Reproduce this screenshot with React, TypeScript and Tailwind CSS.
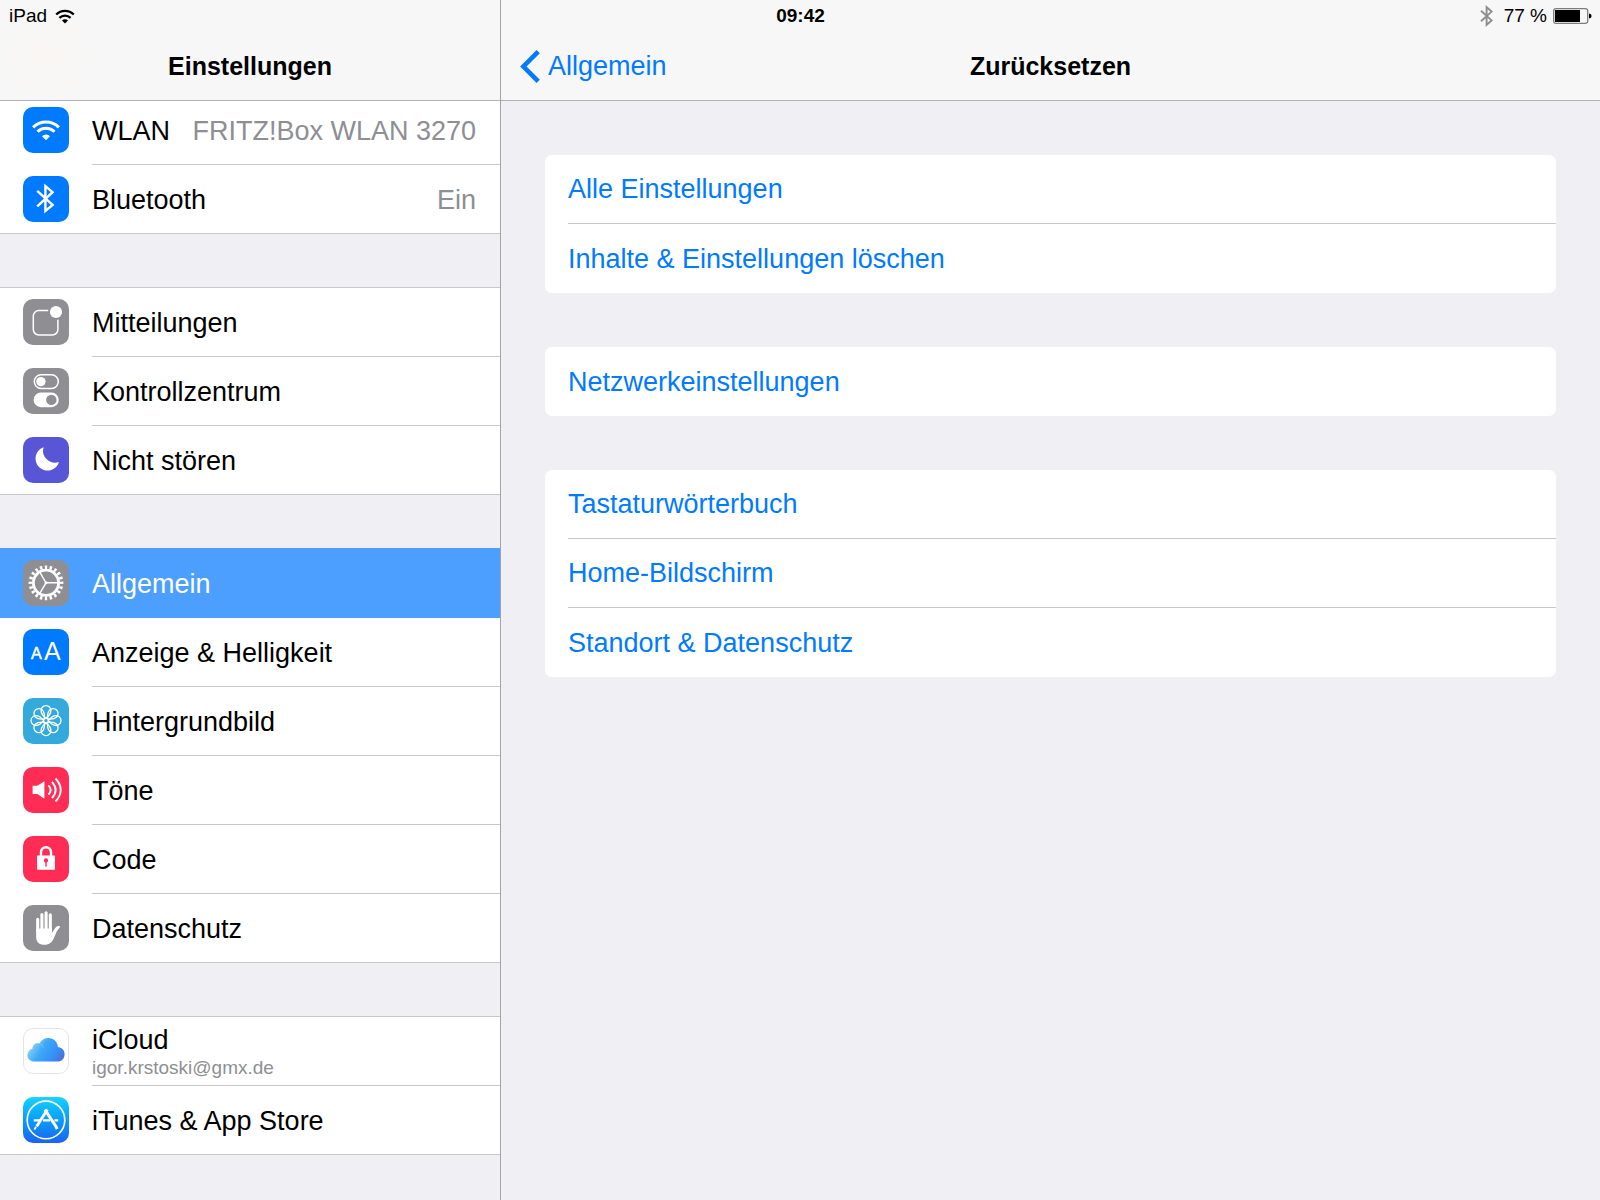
import { useState } from 'react';
import type { ReactNode } from 'react';

type Item = { title: string; icon: ReactNode; value?: string; detail?: string };

function Tile({ className, children }: { className: string; children: ReactNode }) {
  return (
    <svg viewBox="0 0 46 46" aria-hidden="true" className={`w-[46px] h-[46px] mt-[11px] shrink-0 rounded-[10px] ${className}`}>
      {children}
    </svg>
  );
}

const petals = [0, 45, 90, 135, 180, 225, 270, 315];

const WlanIcon = (
  <Tile className="bg-[#007aff]">
    <g fill="none" stroke="#fff" strokeWidth="3">
      <path d="M10.1 20.4A18.3 18.3 0 0 1 35.9 20.4" />
      <path d="M14.5 24.8A12 12 0 0 1 31.5 24.8" />
    </g>
    <path d="M23 33.3L19 29.2A5.8 5.8 0 0 1 27 29.2Z" fill="#fff" />
  </Tile>
);

const BluetoothIcon = (
  <Tile className="bg-[#007aff]">
    <path d="M14.2 14.8L29.6 28.9L22.4 35V10L29.6 16.2L14.2 30.4" fill="none" stroke="#fff" strokeWidth="2.4" />
  </Tile>
);

const NotificationsIcon = (
  <Tile className="bg-[#8e8e93]">
    <rect x="10.3" y="11.6" width="24.6" height="24.4" rx="5.5" fill="none" stroke="#fff" strokeWidth="1.5" />
    <circle cx="33" cy="13" r="8" fill="#8e8e93" />
    <circle cx="33" cy="13" r="6.1" fill="#fff" />
  </Tile>
);

const ControlCenterIcon = (
  <Tile className="bg-[#8e8e93]">
    <rect x="11.3" y="6.8" width="24" height="13.6" rx="6.8" fill="none" stroke="#fff" strokeWidth="1.5" />
    <circle cx="17.9" cy="13.6" r="4.7" fill="#fff" />
    <rect x="10.6" y="24.6" width="25.2" height="14.6" rx="7.3" fill="#fff" />
    <circle cx="28.3" cy="31.9" r="5.2" fill="#8e8e93" />
  </Tile>
);

const MoonIcon = (
  <Tile className="bg-[#5856d6]">
    <path d="M20.6 10.2A12 12 0 1 0 36 25A12 12 0 0 1 20.6 10.2Z" fill="#fff" />
  </Tile>
);

const GearIcon = (
  <Tile className="bg-[#8e8e93]">
    <g fill="none" stroke="#fff">
      <circle cx="23" cy="22.8" r="15.6" strokeWidth="3.6" pathLength="200" strokeDasharray="5 5" strokeDashoffset="2.5" />
      <circle cx="23" cy="22.8" r="12.6" strokeWidth="2.8" />
      <path d="M23 22.8H35M23 22.8L16.8 12.2M23 22.8L16.8 33.4" strokeWidth="1.4" />
    </g>
    <circle cx="23" cy="22.8" r="1.5" fill="#fff" />
  </Tile>
);

const DisplayIcon = (
  <Tile className="bg-[#007aff]">
    <text x="8" y="29.7" fontSize="16" fill="#fff" stroke="#fff" strokeWidth="0.5">A</text>
    <text x="21" y="31.4" fontSize="25" fill="#fff">A</text>
  </Tile>
);

const WallpaperIcon = (
  <Tile className="bg-[#34aadc]">
    <g transform="translate(23 22.6)" fill="none" stroke="#fff" strokeWidth="1.3">
      {petals.map(angle => (
        <path
          key={angle}
          transform={`rotate(${angle})`}
          d="M0 -2.4C-3.4 -5 -4.9 -7.4 -4.9 -10.1A4.9 4.9 0 0 1 4.9 -10.1C4.9 -7.4 3.4 -5 0 -2.4Z"
        />
      ))}
      <circle r="2.4" />
    </g>
  </Tile>
);

const SoundIcon = (
  <Tile className="bg-[#ff2d55]">
    <path d="M9.6 18.8H14.4L21.4 14.2V31.8L14.4 27H9.6Z" fill="#fff" />
    <g fill="none" stroke="#fff" strokeWidth="1.9">
      <path d="M25.4 18.4Q30 23 25.4 27.6" />
      <path d="M28.9 14.9Q36.4 23 28.9 31.1" />
      <path d="M32.6 11.5Q42.8 23 32.6 34.5" />
    </g>
  </Tile>
);

const LockIcon = (
  <Tile className="bg-[#ff2d55]">
    <path d="M18 20V16.2A5 5 0 0 1 28 16.2V20" fill="none" stroke="#fff" strokeWidth="2.4" />
    <rect x="14.1" y="19.6" width="17.8" height="14.2" rx="0.6" fill="#fff" />
    <circle cx="23" cy="24.4" r="2.1" fill="#ff2d55" />
    <rect x="22.3" y="25" width="1.4" height="5.6" fill="#ff2d55" />
  </Tile>
);

const HandIcon = (
  <Tile className="bg-[#8e8e93]">
    <path d="M14.7 26V14.2M18.9 26V9.6M23.1 26V7.8M27.3 26V9.8" fill="none" stroke="#fff" strokeWidth="3.1" strokeLinecap="round" />
    <path d="M13.15 23.5V32C13.2 37 16 39.8 21.6 39.8C26.4 39.8 28.8 37.4 30.6 33.8L34 26L37.3 21.7C36 20.3 33.8 20.9 32.4 22.8L28.85 28V23.5Z" fill="#fff" />
  </Tile>
);

const CloudIcon = (
  <Tile className="bg-white border border-[#e4e4e6]">
    <defs>
      <linearGradient id="cloud" x1="0" y1="0.3" x2="1" y2="0.7">
        <stop offset="0" stopColor="#9adcfb" />
        <stop offset="0.4" stopColor="#3fa9f5" />
        <stop offset="0.75" stopColor="#3391f8" />
        <stop offset="1" stopColor="#4a73dd" />
      </linearGradient>
    </defs>
    <path d="M11 34C6.8 34 3.6 31.4 3.6 27.4C3.6 23.8 5.8 21.4 8.8 20.6C9 16.4 12.6 14.2 16.2 15.2C18 11.4 21.4 9.4 25.4 9.4C31 9.4 35.2 13.4 35.4 18.8C39.6 19 42.4 22.4 42.4 26.4C42.4 31 39.4 34 35.2 34Z" fill="url(#cloud)" />
    <path d="M16.2 15.2C18.4 15.8 19.8 17.4 20.2 19.4" fill="none" stroke="#86d3fa" strokeWidth="0.6" />
  </Tile>
);

const StoreIcon = (
  <Tile className="bg-linear-to-b from-[#1bd2fd] to-[#1d62f0]">
    <g fill="none" stroke="#fff">
      <circle cx="23" cy="22.9" r="18.8" strokeWidth="1.6" />
      <path d="M10.8 23.4H17.4M20 23.4H27M31.4 23.4H35.2" strokeWidth="2.2" />
      <path d="M24.4 12.4L13.6 29.6" strokeWidth="2.8" />
      <path d="M13 29.8L11.4 32.6" strokeWidth="1.8" />
      <path d="M21.8 12.6L32.8 29.2L34.2 32" strokeWidth="3" />
    </g>
  </Tile>
);

const groups: Item[][] = [
  [
    { title: 'WLAN', icon: WlanIcon, value: 'FRITZ!Box WLAN 3270' },
    { title: 'Bluetooth', icon: BluetoothIcon, value: 'Ein' }
  ],
  [
    { title: 'Mitteilungen', icon: NotificationsIcon },
    { title: 'Kontrollzentrum', icon: ControlCenterIcon },
    { title: 'Nicht stören', icon: MoonIcon }
  ],
  [
    { title: 'Allgemein', icon: GearIcon },
    { title: 'Anzeige & Helligkeit', icon: DisplayIcon },
    { title: 'Hintergrundbild', icon: WallpaperIcon },
    { title: 'Töne', icon: SoundIcon },
    { title: 'Code', icon: LockIcon },
    { title: 'Datenschutz', icon: HandIcon }
  ],
  [
    { title: 'iCloud', icon: CloudIcon, detail: 'igor.krstoski@gmx.de' },
    { title: 'iTunes & App Store', icon: StoreIcon }
  ]
];

const resetGroups = [
  ['Alle Einstellungen', 'Inhalte & Einstellungen löschen'],
  ['Netzwerkeinstellungen'],
  ['Tastaturwörterbuch', 'Home-Bildschirm', 'Standort & Datenschutz']
];

function StatusBar() {
  return (
    <div className="absolute inset-x-0 top-0 z-20 h-8 grid grid-cols-3 items-center pl-[9px] pr-2 text-[19px] text-black">
      <div className="flex items-center gap-2">
        <span>iPad</span>
        <svg viewBox="0 0 20 15" aria-hidden="true" className="w-5 h-[15px]">
          <g fill="none" stroke="#000" strokeWidth="2.2">
            <path d="M1.2 5.6A12.4 12.4 0 0 1 18.8 5.6" />
            <path d="M4.4 8.9A8 8 0 0 1 15.6 8.9" />
          </g>
          <path d="M10 14.4L7 11.4A4.2 4.2 0 0 1 13 11.4Z" fill="#000" />
        </svg>
      </div>
      <span className="text-center font-bold">09:42</span>
      <div className="flex items-center justify-end gap-[6px]">
        <svg viewBox="0 0 14 22" aria-hidden="true" className="w-[14px] h-[22px] mr-1">
          <path d="M1 5.8L11.6 15.4L6.6 19.8V2.2L11.6 6.6L1 16.2" fill="none" stroke="#8e8e8e" strokeWidth="1.9" />
        </svg>
        <span>77 %</span>
        <svg viewBox="0 0 39 16" aria-hidden="true" className="w-[39px] h-4">
          <rect x="0.7" y="0.7" width="34" height="14.6" rx="2.4" fill="none" stroke="#7d7d7d" strokeWidth="1.3" />
          <rect x="2" y="2" width="25" height="12" fill="#000" />
          <path d="M36 5.4Q38.6 5.6 38.6 8Q38.6 10.4 36 10.6Z" fill="#000" />
        </svg>
      </div>
    </div>
  );
}

export default function App() {
  const [active, setActive] = useState('Allgemein');

  return (
    <div className="relative flex min-h-screen overflow-hidden bg-[#efeff4] text-black text-[27px] leading-8 font-['Liberation_Sans',Arial,sans-serif]">
      <StatusBar />

      <aside className="w-[501px] shrink-0 border-r border-[#a3a3a7]">
        <header className="relative z-10 h-[101px] pt-8 flex items-center justify-center border-b border-[#b2b2b5] bg-[#f7f7f7] bg-[radial-gradient(circle_at_46px_56px,#f9f6f2,#f7f7f7_48px)]">
          <h1 className="font-bold text-[25px]">Einstellungen</h1>
        </header>

        <nav className="-mt-[6px] flex flex-col gap-[53px]">
          {groups.map((group, groupIdx) => (
            <ul key={groupIdx} className="bg-white border-y border-[#c8c7cc]">
              {group.map((item, idx) => {
                const isActive = item.title === active;
                const isLast = idx === group.length - 1;

                return (
                  <li key={item.title}>
                    <button
                      onClick={() => setActive(item.title)}
                      className={`w-full flex items-start gap-[23px] pl-[23px] text-left cursor-pointer ${isActive ? '-mt-px pt-px bg-[#4c9fff] text-white' : ''}`}
                    >
                      {item.icon}
                      <span className={`flex-1 min-w-0 flex items-center justify-between pt-0.5 pr-6 ${isLast ? 'h-[68px]' : 'h-[69px] border-b'} ${isActive ? 'border-transparent' : 'border-[#c8c7cc]'}`}>
                        <span className="flex flex-col">
                          {item.title}
                          {item.detail && <span className="text-[19px] leading-6 text-[#8e8e93]">{item.detail}</span>}
                        </span>
                        {item.value && <span className="text-[#8e8e93]">{item.value}</span>}
                      </span>
                    </button>
                  </li>
                );
              })}
            </ul>
          ))}
        </nav>
      </aside>

      <main className="flex-1 min-w-0">
        <header className="h-[101px] pt-8 px-[19px] grid grid-cols-[1fr_auto_1fr] items-center border-b border-[#b2b2b5] bg-[#f7f7f8]">
          <a href="#allgemein" className="flex items-center gap-2 text-[#007aff]">
            <svg viewBox="0 0 20 33" aria-hidden="true" className="w-5 h-[33px]">
              <path d="M18.2 1.6L3.4 16.5L18.2 31.4" fill="none" stroke="#007aff" strokeWidth="4.6" />
            </svg>
            Allgemein
          </a>
          <h2 className="font-bold text-[25px]">Zurücksetzen</h2>
        </header>

        <div className="px-11 py-[54px] flex flex-col gap-[54px]">
          {resetGroups.map((group, groupIdx) => (
            <ul key={groupIdx} className="bg-white rounded-[7px] pl-[23px]">
              {group.map((label, idx) => (
                <li key={label} className={idx < group.length - 1 ? 'border-b border-[#c8c7cc]' : ''}>
                  <button className={`w-full text-left text-[#007aff] cursor-pointer ${idx < group.length - 1 ? 'h-[68px]' : 'h-[69px]'}`}>
                    {label}
                  </button>
                </li>
              ))}
            </ul>
          ))}
        </div>
      </main>
    </div>
  );
}
